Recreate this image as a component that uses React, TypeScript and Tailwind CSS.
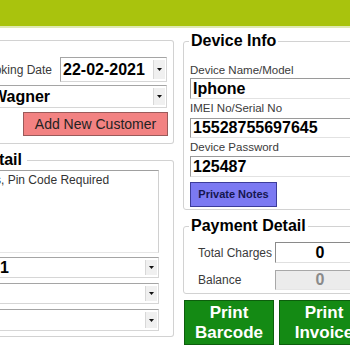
const font = "font-['Liberation_Sans',Arial,sans-serif]"

function Arrow() {
  return (
    <div className="flex h-full w-[12px] items-center justify-center border-l border-[#d8d8d8] bg-[#f0f0f0]">
      <svg width="5" height="3" viewBox="0 0 5 3">
        <path d="M0 0 L5 0 L2.5 3 Z" fill="#111" />
      </svg>
    </div>
  )
}

function Combo({ text, className }: { text: string; className: string }) {
  return (
    <div
      className={`flex items-stretch border border-[#a5a5a5] border-b-[#d6d6d6] border-r-[#d6d6d6] bg-white ${className}`}
    >
      <div className="flex flex-1 items-center pl-[1px] text-[16px] font-bold leading-none text-black">{text}</div>
      <div className="py-[2px] pr-[1px]">
        <Arrow />
      </div>
    </div>
  )
}

function TextBox({ text, className }: { text: string; className: string }) {
  return (
    <div
      className={`flex items-center border border-[#9a9a9a] border-b-[#e2e2e2] border-r-[#e2e2e2] bg-white pl-[2px] text-[16px] font-bold leading-none text-black ${className}`}
    >
      {text}
    </div>
  )
}

export default function App() {
  return (
    <div className={`relative h-[350px] w-[350px] overflow-hidden bg-white ${font}`}>
      <div className="h-[26px] bg-[#a9c30d]" />
      <div className="h-[2px] bg-[#dfe9b4]" />

      <div className="flex">
        {/* left column */}
        <div className="w-[174px] shrink-0">
          <div className="mt-[12px] h-[104px] rounded-tr-[3px] rounded-br-[3px] border border-l-0 border-[#d2d2d2] pt-[16px]">
            <div className="flex items-center">
              <div className="flex w-[52px] justify-end whitespace-nowrap text-[12px] text-[#3a3a3a]">Booking Date</div>
              <Combo text="22-02-2021" className="ml-[8px] h-[25px] w-[107px] pl-[1px]" />
            </div>
            <Combo text="Wagner" className="-ml-[10px] mt-[3px] h-[23px] w-[177px]" />
            <button className="ml-[23px] mt-[4px] flex h-[24px] w-[145px] items-center justify-center border border-[#9a5a5a] bg-[#f28282] text-[14px] leading-none text-[#222]">
              Add New Customer
            </button>
          </div>

          <div className="relative mt-[16px] h-[177px] rounded-tr-[3px] rounded-br-[3px] border border-l-0 border-[#d2d2d2]">
            <div className="absolute right-[146px] -top-[11px] whitespace-nowrap bg-white pr-[5px] text-[16px] font-bold leading-[20px] text-black">
              Customer Detail
            </div>
            <div className="-ml-[46px] mt-[9px] h-[83px] w-[205px] border border-[#a0a0a0] border-b-[#e6e6e6] border-r-[#d0d0d0] bg-white px-[2px] pt-[2px] text-[12px] leading-[14px] text-[#333]">
              Address, Pin Code Required
            </div>
            <div className="mt-[4px] flex flex-col gap-[5px]">
              <Combo text="1" className="-ml-[2px] h-[21px] w-[161px]" />
              <Combo text="" className="-ml-[2px] h-[21px] w-[161px]" />
              <Combo text="" className="-ml-[2px] h-[22px] w-[161px]" />
            </div>
          </div>
        </div>

        {/* right column */}
        <div className="ml-[9px] w-[200px] shrink-0">
          <div className="relative mt-[13px] h-[169px] rounded-[3px] border border-[#d2d2d2] pl-[6px] pt-[20px]">
            <div className="absolute left-[5px] -top-[11px] bg-white px-[2px] text-[16px] font-bold leading-[20px] text-black">
              Device Info
            </div>
            <div className="h-[16px] text-[11.5px] leading-[16px] text-[#3a3a3a]">Device Name/Model</div>
            <TextBox text="Iphone" className="h-[21px] w-[190px]" />
            <div className="mt-[1px] h-[16px] text-[11.5px] leading-[16px] text-[#3a3a3a]">IMEI No/Serial No</div>
            <TextBox text="15528755697645" className="mt-[2px] h-[20px] w-[190px] text-[16.5px]" />
            <div className="mt-[1px] h-[16px] text-[11.5px] leading-[16px] text-[#3a3a3a]">Device Password</div>
            <TextBox text="125487" className="mt-[1px] h-[21px] w-[190px]" />
            <button className="mt-[5px] flex h-[25px] w-[87px] items-center justify-center border border-[#3c3c9a] bg-[#7b79f2] text-[11px] font-bold leading-none text-[#161650]">
              Private Notes
            </button>
          </div>

          <div className="relative mt-[16px] h-[68px] rounded-[3px] border border-[#d2d2d2] pt-[15px]">
            <div className="absolute left-[5px] -top-[11px] bg-white px-[2px] text-[16px] font-bold leading-[20px] text-black">
              Payment Detail
            </div>
            <div className="flex items-center">
              <div className="w-[91px] pl-[14px] text-[12px] text-[#3a3a3a]">Total Charges</div>
              <div className="flex h-[21px] w-[90px] items-center justify-center border border-[#8a8a8a] border-b-[#e0e0e0] border-r-[#e0e0e0] bg-white text-[16px] font-bold leading-none text-black">
                0
              </div>
            </div>
            <div className="mt-[7px] flex items-center">
              <div className="w-[91px] pl-[14px] text-[12px] text-[#3a3a3a]">Balance</div>
              <div className="flex h-[20px] w-[90px] items-center justify-center border border-[#a8a8a8] border-b-[#e6e6e6] border-r-[#e6e6e6] bg-[#ececec] text-[16px] font-bold leading-none text-[#8a8a8a]">
                0
              </div>
            </div>
          </div>

          <div className="mt-[6px] flex gap-[5px] pl-[1px]">
            <button className="flex h-[45px] w-[90px] flex-col items-center justify-center border border-[#0d5e0d] bg-[#148a14] text-[17px] font-bold leading-[20px] text-white">
              <span>Print</span>
              <span>Barcode</span>
            </button>
            <button className="flex h-[45px] w-[90px] flex-col items-center justify-center border border-[#0d5e0d] bg-[#148a14] text-[17px] font-bold leading-[20px] text-white">
              <span>Print</span>
              <span>Invoice</span>
            </button>
          </div>
        </div>
      </div>
    </div>
  )
}
